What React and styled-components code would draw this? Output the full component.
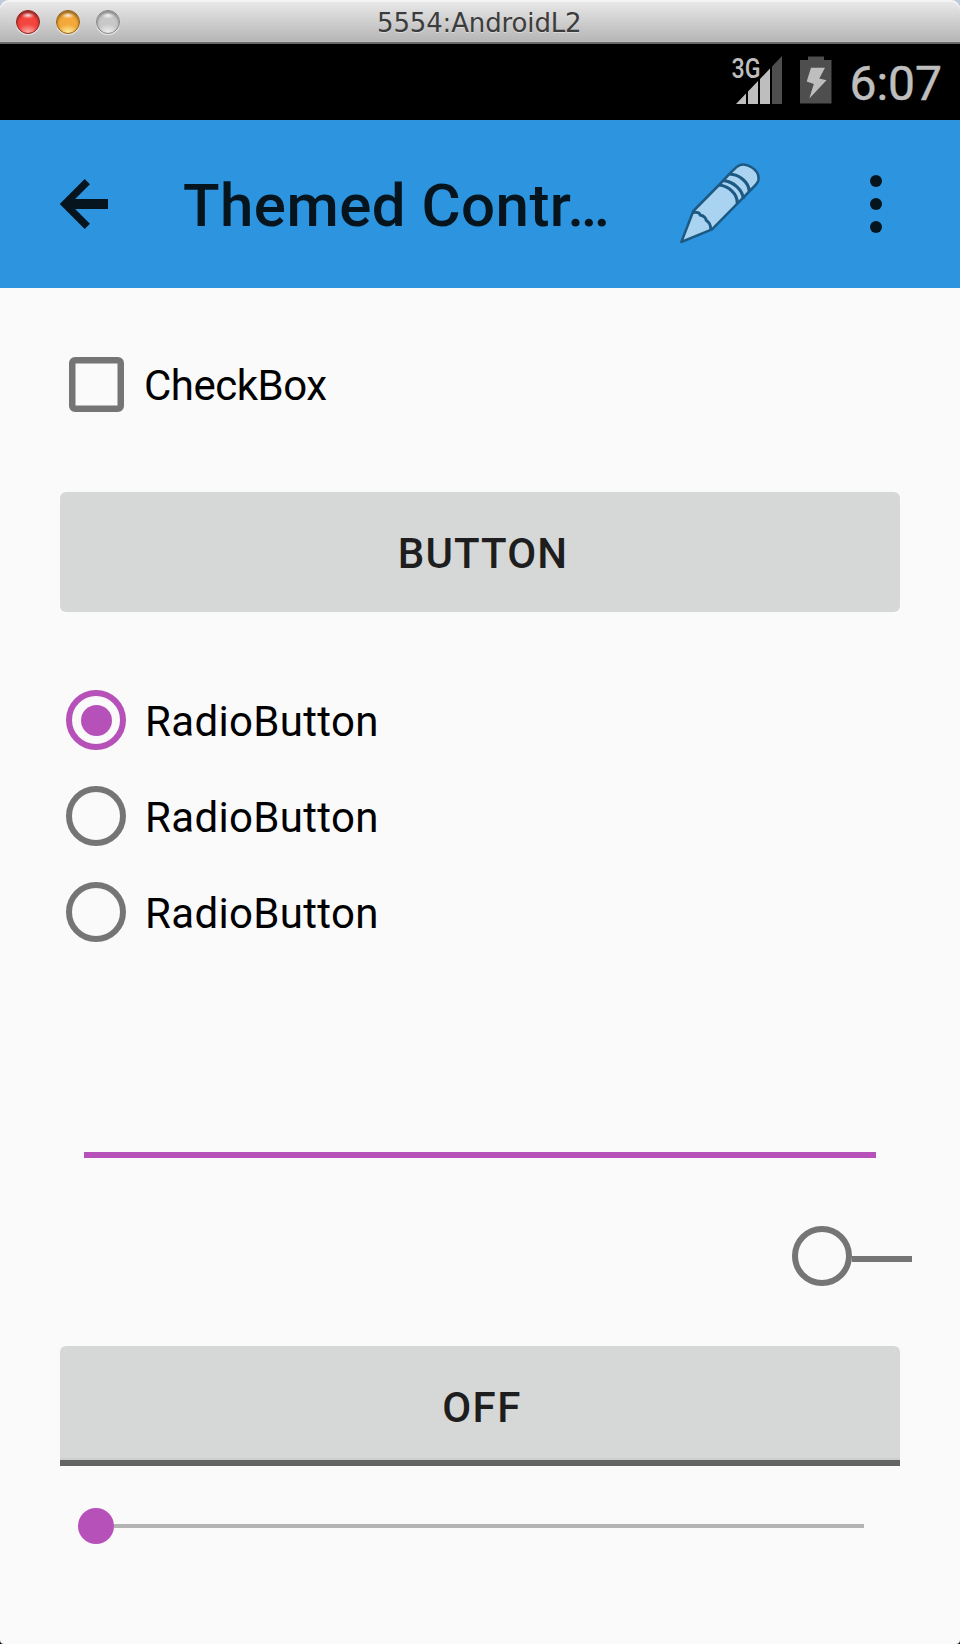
import React from 'react';
import styled, { createGlobalStyle, css } from 'styled-components';

const color = {
  primary: '#2d95df',
  accent: '#b551b8',
  ink: '#06151d',
  control: '#757575',
  button: '#d6d8d7',
  surface: '#fafafa',
};

const GlobalStyle = createGlobalStyle`
  *, *::before, *::after { box-sizing: border-box; }
  html, body { margin: 0; padding: 0; background: #000; }
  svg { display: block; flex: none; }
`;

const Window = styled.div`
  display: flex;
  flex-direction: column;
  width: 960px;
  height: 1644px;
  overflow: hidden;
  font-family: Roboto, 'Liberation Sans', sans-serif;
`;

const TitleBarFrame = styled.div`
  height: 44px;
  background: #bccbdc;
`;

const TitleBar = styled.div`
  display: grid;
  grid-template-columns: 377px auto;
  align-items: start;
  height: 44px;
  border-radius: 9px 9px 0 0;
  border-bottom: 2px solid #686868;
  background: linear-gradient(#ebebeb, #e0e0e0 8px, #b5b5b5);
  box-shadow: inset 0 2px 0 #f3f3f3, inset 0 -1px 0 #bdbdbd;
`;

const WindowTitle = styled.div`
  padding-top: 8px;
  font: 26px/30px 'DejaVu Sans', sans-serif;
  letter-spacing: -0.14px;
  color: #3c3c3c;
  text-shadow: 0 1px 0 rgba(255, 255, 255, 0.4);
`;

const Lights = styled.div`
  display: flex;
  gap: 16px;
  padding: 10px 0 0 16px;
`;

const Light = styled.span`
  width: 24px;
  height: 24px;
  border-radius: 50%;
  border: 1.5px solid ${(p) => p.$edge};
  background:
    radial-gradient(ellipse 7px 3.5px at 50% 4px, rgba(255, 255, 255, 0.9), rgba(255, 255, 255, 0.1) 90%, transparent),
    radial-gradient(ellipse 11px 9px at 50% 100%, ${(p) => p.$glow}, transparent),
    ${(p) => p.$fill};
  box-shadow: inset 0 2px 3px ${(p) => p.$edge}, 0 1px 1px rgba(255, 255, 255, 0.7);
`;

const StatusBar = styled.div`
  display: flex;
  align-items: flex-start;
  justify-content: flex-end;
  height: 76px;
  padding: 6px 18px 0 0;
  background: #000;
`;

const Clock = styled.div`
  margin: 5px 0 0 16px;
  font-size: 48px;
  line-height: 57px;
  color: #bebebe;
  -webkit-text-stroke: 0.5px #bebebe;
`;

const AppBar = styled.header`
  display: flex;
  align-items: center;
  height: 168px;
  padding: 0 78px 0 60px;
  background: ${color.primary};
`;

const Title = styled.h1`
  flex: 1;
  margin: 0 0 0 75px;
  padding-top: 3px;
  font-size: 60px;
  font-weight: 500;
  line-height: 71px;
  letter-spacing: 0.46px;
  white-space: nowrap;
  color: ${color.ink};
`;

const Dots = styled.div`
  display: flex;
  flex-direction: column;
  gap: 11px;
  margin-left: 109px;
`;

const Dot = styled.span`
  width: 12px;
  height: 12px;
  border-radius: 50%;
  background: ${color.ink};
`;

const Content = styled.main`
  flex: 1;
  display: flex;
  flex-direction: column;
  padding: 48px 60px 0;
  border-radius: 0 0 4px 4px;
  background: ${color.surface};
`;

const Option = styled.label`
  display: grid;
  grid-template-columns: 84px auto;
  align-items: center;
  height: 96px;
`;

const OptionText = styled.span`
  padding: 3px 0 0 ${(p) => p.$indent || '0'};
  font-size: 42px;
  line-height: 49px;
  letter-spacing: ${(p) => p.$spacing};
  color: #000;
`;

const CheckMark = styled.span`
  width: 55px;
  height: 55px;
  margin-left: 8.5px;
  border: 6px solid ${color.control};
  border-radius: 6px;
  box-shadow: inset 0 0 0 0.5px ${color.control};
`;

const Circle = styled.span`
  display: flex;
  align-items: center;
  justify-content: center;
  width: 60px;
  height: 60px;
  border: 6px solid ${(p) => (p.$on ? color.accent : color.control)};
  border-radius: 50%;
  ${(p) =>
    p.$on &&
    css`
      &::after {
        content: '';
        width: 31px;
        height: 31px;
        border-radius: 50%;
        background: ${color.accent};
      }
    `}
`;

const RadioMark = styled(Circle)`
  margin-left: 6px;
`;

const Button = styled.button`
  display: flex;
  justify-content: center;
  height: 120px;
  margin: 0;
  padding: 37px 0 0 ${(p) => p.$nudge};
  border: 0;
  border-radius: ${(p) => (p.$toggle ? '6px 6px 0 0' : '6px')};
  background: ${color.button};
  font-family: inherit;
  font-size: 42px;
  font-weight: 500;
  line-height: 49px;
  letter-spacing: ${(p) => p.$spacing};
  color: #1e1e1e;
  ${(p) => p.$toggle && css`
    border-bottom: 6px solid #636363;
    box-shadow: inset 0 -2px 0 #cdcfce;
  `}
`;

const PushButton = styled(Button)`
  margin-top: 60px;
`;

const RadioGroup = styled.div`
  margin-top: 60px;
`;

const TextField = styled.div`
  height: 122px;
  margin: 76px 24px 0;
  border-bottom: 6px solid ${color.accent};
`;

const SwitchRow = styled.div`
  display: flex;
  align-items: center;
  justify-content: flex-end;
  height: 60px;
  margin: 68px -12px 60px 0;
`;

const SwitchTrack = styled.span`
  width: 60px;
  height: 6px;
  margin-top: 6px;
  background: ${color.control};
`;

const Slider = styled.div`
  display: flex;
  align-items: center;
  height: 36px;
  margin: 42px 36px 0 18px;
`;

const Thumb = styled.span`
  width: 36px;
  height: 36px;
  border-radius: 50%;
  background: ${color.accent};
`;

const Track = styled.span`
  flex: 1;
  height: 4px;
  background: #b3b3b3;
`;

const SignalIcon = () => (
  <svg width="57" height="60" viewBox="726 50 57 60">
    <path d="M736 104L746 93.5V104zM748 91.5L758 81V104H748zM760 79L770 68.5V104H760z" fill="#bebebe" />
    <path d="M772 66.5L782 56V104H772z" fill="#4e4e4e" />
    <text
      x="731.5"
      y="78"
      textLength="29"
      lengthAdjust="spacingAndGlyphs"
      fontFamily="Roboto, sans-serif"
      fontWeight="500"
      fontSize="28"
      fill="#bebebe"
    >
      3G
    </text>
  </svg>
);

const BatteryIcon = () => (
  <svg width="50" height="60" viewBox="783 50 50 60">
    <path d="M808 56.5H824V60H831.5V103.5H800V60H808z" fill="#4e4e4e" />
    <path d="M811 67.7H825L819.3 78.5L826.5 80.3L809.3 98.5L813.8 84L806.7 81.5z" fill="#bebebe" />
  </svg>
);

const BackIcon = () => (
  <svg width="48" height="52" viewBox="60 178 48 52" fill="none" stroke={color.ink}>
    <path d="M87.3 181.7L65 204L87.3 226.3" strokeWidth="7.4" />
    <path d="M67 204H108" strokeWidth="10" />
  </svg>
);

const PencilIcon = () => (
  <svg width="82" height="84" viewBox="88 65 246 252" stroke="#1c5983" strokeWidth="7.5" strokeLinejoin="round">
    <path
      d="M95 305L131 212L208 134L243 97L262 79C287 61 332 88 326 120C324 128 318 134 312 140L263 190L187 267z"
      fill="#aad3f1"
    />
    <path d="M129 217C141 214 151 217 151 224C165 227 170 235 169 240C179 246 184 254 183 268" fill="none" strokeWidth="8.5" />
    <path d="M208 134C236 137 264 159 263 190M222 121C250 124 279 147 281 176M239 101C268 102 297 124 299 153" fill="none" strokeWidth="9.5" />
  </svg>
);

export default function App() {
  return (
    <Window>
      <GlobalStyle />
      <TitleBarFrame>
        <TitleBar>
          <Lights>
            <Light $edge="#8c2320" $fill="#f4453f" $glow="#ffb4b0" />
            <Light $edge="#93601a" $fill="#f2a83a" $glow="#fff3a0" />
            <Light $edge="#858585" $fill="#c8c8c8" $glow="#f2f2f2" />
          </Lights>
          <WindowTitle>5554:AndroidL2</WindowTitle>
        </TitleBar>
      </TitleBarFrame>
      <StatusBar>
        <SignalIcon />
        <BatteryIcon />
        <Clock>6:07</Clock>
      </StatusBar>
      <AppBar>
        <BackIcon />
        <Title>Themed Contr…</Title>
        <PencilIcon />
        <Dots>
          <Dot />
          <Dot />
          <Dot />
        </Dots>
      </AppBar>
      <Content>
        <Option>
          <CheckMark />
          <OptionText $spacing="-0.5px">CheckBox</OptionText>
        </Option>
        <PushButton $nudge="6px" $spacing="1.1px">BUTTON</PushButton>
        <RadioGroup>
          {[true, false, false].map((on, i) => (
            <Option key={i}>
              <RadioMark $on={on} />
              <OptionText $indent="1px" $spacing="0.33px">RadioButton</OptionText>
            </Option>
          ))}
        </RadioGroup>
        <TextField />
        <SwitchRow>
          <Circle />
          <SwitchTrack />
        </SwitchRow>
        <Button $toggle $nudge="4px" $spacing="1.5px">OFF</Button>
        <Slider>
          <Thumb />
          <Track />
        </Slider>
      </Content>
    </Window>
  );
}
